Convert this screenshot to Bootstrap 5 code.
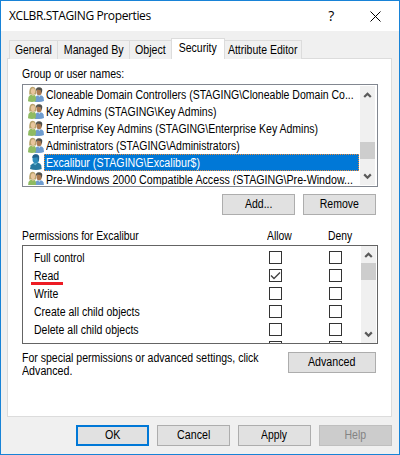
<!DOCTYPE html>
<html lang="en">
<head>
<meta charset="utf-8">
<title>XCLBR.STAGING Properties</title>
<link href="https://cdn.jsdelivr.net/npm/bootstrap@5.3.0/dist/css/bootstrap.min.css" rel="stylesheet">
<style>
body{font:12px/13px "Liberation Sans",Arial,sans-serif;color:#000;width:400px;height:455px;overflow:hidden}
.dialog{width:400px;height:455px;background:#f0f0f0;border:1px solid #1883d7}
/* condensed dialog lettering */
.tx{display:inline-block;white-space:nowrap;transform:scaleX(.876);transform-origin:0 50%}
.tx.slim{transform:scaleX(.862)}
.tx.full{transform:scaleX(.889)}
.btn .tx,.nav-link .tx{transform-origin:50% 50%}
.titlebar{height:30px;padding-left:8px;font:12px/30px "Open Sans","Noto Sans",sans-serif;letter-spacing:-.38px}
.titlebar .tools{padding-right:18px;gap:36px}
.titlebar .help{font-size:14px}
.tabs{height:21px;margin:7px 0 -1px 8px;position:relative}
.tabs .nav-link{display:flex;justify-content:center;height:19px;padding:0;line-height:18px;color:#000;background:#f0f0f0;border:1px solid #dcdcdc;border-right:0;border-bottom:0;border-radius:0}
.tabs .nav-link.active{height:21px;background:#fff;color:#000;border:1px solid #dcdcdc;border-bottom:0;margin:0}
.tabs .last{border-right:1px solid #dcdcdc;border-left:0}
.t1{width:48px}.t2{width:72px}.t3{width:42px}.t4{width:54px}.t5{width:77px}
.panel{width:385px;height:359px;margin-left:6px;padding:9px 13px 0 14px;background:#fff;border:1px solid #dcdcdc}
.caption{height:16px;line-height:13px;white-space:nowrap}
.caption.heads{margin-top:15px;height:15px}
.heads .c1{width:245px}.heads .c2{width:61px}
.users{width:356px;height:103px;border:1px solid #828790;padding:1px 2px 1px 5px}
.rows{min-width:0}
.user{height:17px;line-height:17px}
.user svg{flex:none}
.user .name{flex:1;min-width:0;padding-left:2px;height:17px;line-height:18px}
.user.on .name{background:#0078d7;color:#fff;outline:1px dotted #e88a3a;outline-offset:-1px}
.scroll{width:15px;background:#f0f0f0;flex:none}
.users .scroll{margin-left:1px}
.users .thumb{margin-bottom:9px}
.scroll svg{display:block}
.thumb{height:17px;background:#cdcdcd}
.acts{padding:7px 2px 0 0}
.btn.w{width:73px;height:21px;padding:0;border:1px solid #adadad;border-radius:0;background:#e1e1e1;color:#000;font-size:12px;line-height:19px}
.btn.w.ok{border:2px solid #0078d7;line-height:17px}
.btn.w.wide{width:88px}
.btn.w:disabled{background:#ccc;border-color:#bfbfbf;color:#838383;opacity:1}
.perms{width:356px;height:99px;border:1px solid #646464;padding-right:1px}
.grid{padding:4px 0 0 11px}
.perm{height:18px;line-height:17px}
.perm .lbl{width:235px;height:18px}
.rd{display:inline-block;position:relative;height:17px;vertical-align:top}
.rd::after{content:"";position:absolute;left:-3px;width:32px;top:14px;height:3px;background:#ed1c24}
.box{width:13px;height:13px;border:1px solid #333;background:#fff;margin-top:1px;flex:none}
.box+.box{margin-left:47px}
.box svg{display:block}
.note{padding:8px 2px 0 0}
.note p{margin:0;width:250px}
.foot{padding:8px 7px 0 0}
</style>
</head>
<body>
<svg width="0" height="0" class="position-absolute">
<defs>
<symbol id="group" viewBox="0 0 16 16">
<path d="M6.6 16 7.2 11.5Q8 9.7 10.2 9.2L12.3 8.9Q15 9.5 15.6 11.5L16 15Q12 16.4 6.6 16Z" fill="#6e9ccf"/>
<path d="M10 9.2 11.3 11 13 9Z" fill="#d6e7f4"/>
<ellipse cx="11.1" cy="5.8" rx="2.7" ry="3.5" fill="#a97951"/>
<path d="M8 5Q7.4 1.5 11 1.3 14.8 1.3 14.2 5L13.4 7.3 12.8 4.2 9.5 3.6Z" fill="#50504b"/>
<path d="M1.2 8.5Q.8 1.1 4.6.8 8.7 1 8 8.6Z" fill="#b8a26c"/>
<ellipse cx="5" cy="5.2" rx="2.1" ry="3" fill="#e8c69e"/>
<path d="M0 15.3.5 10.9Q1.5 8.8 4.2 8.4L6.2 8.7Q8 9.5 8 12L7.6 15.5Q3.5 16.5 0 15.3Z" fill="#8fbb62"/>
<path d="M3.5 8.4 5 10.3 6.2 8.4Z" fill="#e8c69e"/>
</symbol>
<symbol id="person" viewBox="0 0 16 16">
<path d="M2 15 2.7 11.2Q4 9.3 6.3 9L10.2 8.8Q12.7 9.5 13.3 11.4L13.7 15Q8 17 2 15Z" fill="#27789f"/>
<ellipse cx="7.8" cy="5" rx="3.3" ry="4.4" fill="#2e8cba"/>
<path d="M4.3 4Q4 .2 7.8 .2 12 .2 11.1 4.8L10.1 7.5 9.5 3.2Z" fill="#205f8b"/>
<path d="M5 9.4 7.2 11.2 9.5 9Z" fill="#69b9d5"/>
</symbol>
<symbol id="up" viewBox="0 0 15 17"><path d="M4.2 11 7.5 7.7 10.8 11" fill="none" stroke="#5a5a5a" stroke-width="2.2"/></symbol>
<symbol id="down" viewBox="0 0 15 17"><path d="M4.2 6.4 7.5 9.7 10.8 6.4" fill="none" stroke="#5a5a5a" stroke-width="2.2"/></symbol>
</defs>
</svg>
<main class="dialog">
<header class="titlebar bg-white d-flex justify-content-between">
<span>XCLBR.STAGING Properties</span>
<div class="tools d-flex align-items-center"><span class="help">?</span><svg width="11" height="11" viewBox="0 0 11 11"><path d="M.5.5l10 10M10.5.5l-10 10" stroke="#000" fill="none"/></svg></div>
</header>
<nav class="tabs nav flex-nowrap align-items-end">
<a class="nav-link t1"><span class="tx slim">General</span></a>
<a class="nav-link t2"><span class="tx full">Managed By</span></a>
<a class="nav-link t3"><span class="tx full">Object</span></a>
<a class="nav-link active t4"><span class="tx">Security</span></a>
<a class="nav-link last t5"><span class="tx">Attribute Editor</span></a>
</nav>
<section class="panel">
<div class="caption"><span class="tx">Group or user names:</span></div>
<div class="users d-flex">
<div class="rows flex-grow-1 overflow-hidden">
<div class="user d-flex"><svg width="16" height="16"><use href="#group"/></svg><div class="name"><span class="tx">Cloneable Domain Controllers (STAGING\Cloneable Domain Co...</span></div></div>
<div class="user d-flex"><svg width="16" height="16"><use href="#group"/></svg><div class="name"><span class="tx">Key Admins (STAGING\Key Admins)</span></div></div>
<div class="user d-flex"><svg width="16" height="16"><use href="#group"/></svg><div class="name"><span class="tx">Enterprise Key Admins (STAGING\Enterprise Key Admins)</span></div></div>
<div class="user d-flex"><svg width="16" height="16"><use href="#group"/></svg><div class="name"><span class="tx">Administrators (STAGING\Administrators)</span></div></div>
<div class="user on d-flex"><svg width="16" height="16"><use href="#person"/></svg><div class="name"><span class="tx full">Excalibur (STAGING\Excalibur$)</span></div></div>
<div class="user d-flex"><svg width="16" height="16"><use href="#group"/></svg><div class="name"><span class="tx full">Pre-Windows 2000 Compatible Access (STAGING\Pre-Window...</span></div></div>
</div>
<div class="scroll d-flex flex-column"><svg width="15" height="17"><use href="#up"/></svg><div class="thumb mt-auto"></div><svg width="15" height="17"><use href="#down"/></svg></div>
</div>
<div class="acts d-flex justify-content-end gap-2"><button class="btn w"><span class="tx">Add...</span></button><button class="btn w"><span class="tx">Remove</span></button></div>
<div class="caption heads d-flex"><div class="c1"><span class="tx slim">Permissions for Excalibur</span></div><div class="c2"><span class="tx slim">Allow</span></div><div><span class="tx slim">Deny</span></div></div>
<div class="perms d-flex justify-content-between overflow-hidden">
<div class="grid">
<div class="perm d-flex"><div class="lbl"><span class="tx slim">Full control</span></div><i class="box"></i><i class="box"></i></div>
<div class="perm d-flex"><div class="lbl"><span class="rd"><span class="tx">Read</span></span></div><i class="box"><svg width="11" height="11"><path d="M1 5.5 4 8.5 10 2.5" fill="none" stroke="#444" stroke-width="1.4"/></svg></i><i class="box"></i></div>
<div class="perm d-flex"><div class="lbl"><span class="tx">Write</span></div><i class="box"></i><i class="box"></i></div>
<div class="perm d-flex"><div class="lbl"><span class="tx">Create all child objects</span></div><i class="box"></i><i class="box"></i></div>
<div class="perm d-flex"><div class="lbl"><span class="tx">Delete all child objects</span></div><i class="box"></i><i class="box"></i></div>
<div class="perm d-flex"><div class="lbl"></div><i class="box"></i><i class="box"></i></div>
</div>
<div class="scroll d-flex flex-column justify-content-between"><div><svg width="15" height="17"><use href="#up"/></svg><div class="thumb"></div></div><svg width="15" height="17"><use href="#down"/></svg></div>
</div>
<div class="note d-flex justify-content-between"><p><span class="tx">For special permissions or advanced settings, click</span><br><span class="tx full">Advanced.</span></p><button class="btn w wide"><span class="tx full">Advanced</span></button></div>
</section>
<footer class="foot d-flex justify-content-end gap-2"><button class="btn w ok"><span class="tx full">OK</span></button><button class="btn w"><span class="tx full">Cancel</span></button><button class="btn w"><span class="tx slim">Apply</span></button><button class="btn w" disabled><span class="tx">Help</span></button></footer>
</main>
<script src="https://cdn.jsdelivr.net/npm/bootstrap@5.3.0/dist/js/bootstrap.bundle.min.js"></script>
</body>
</html>
